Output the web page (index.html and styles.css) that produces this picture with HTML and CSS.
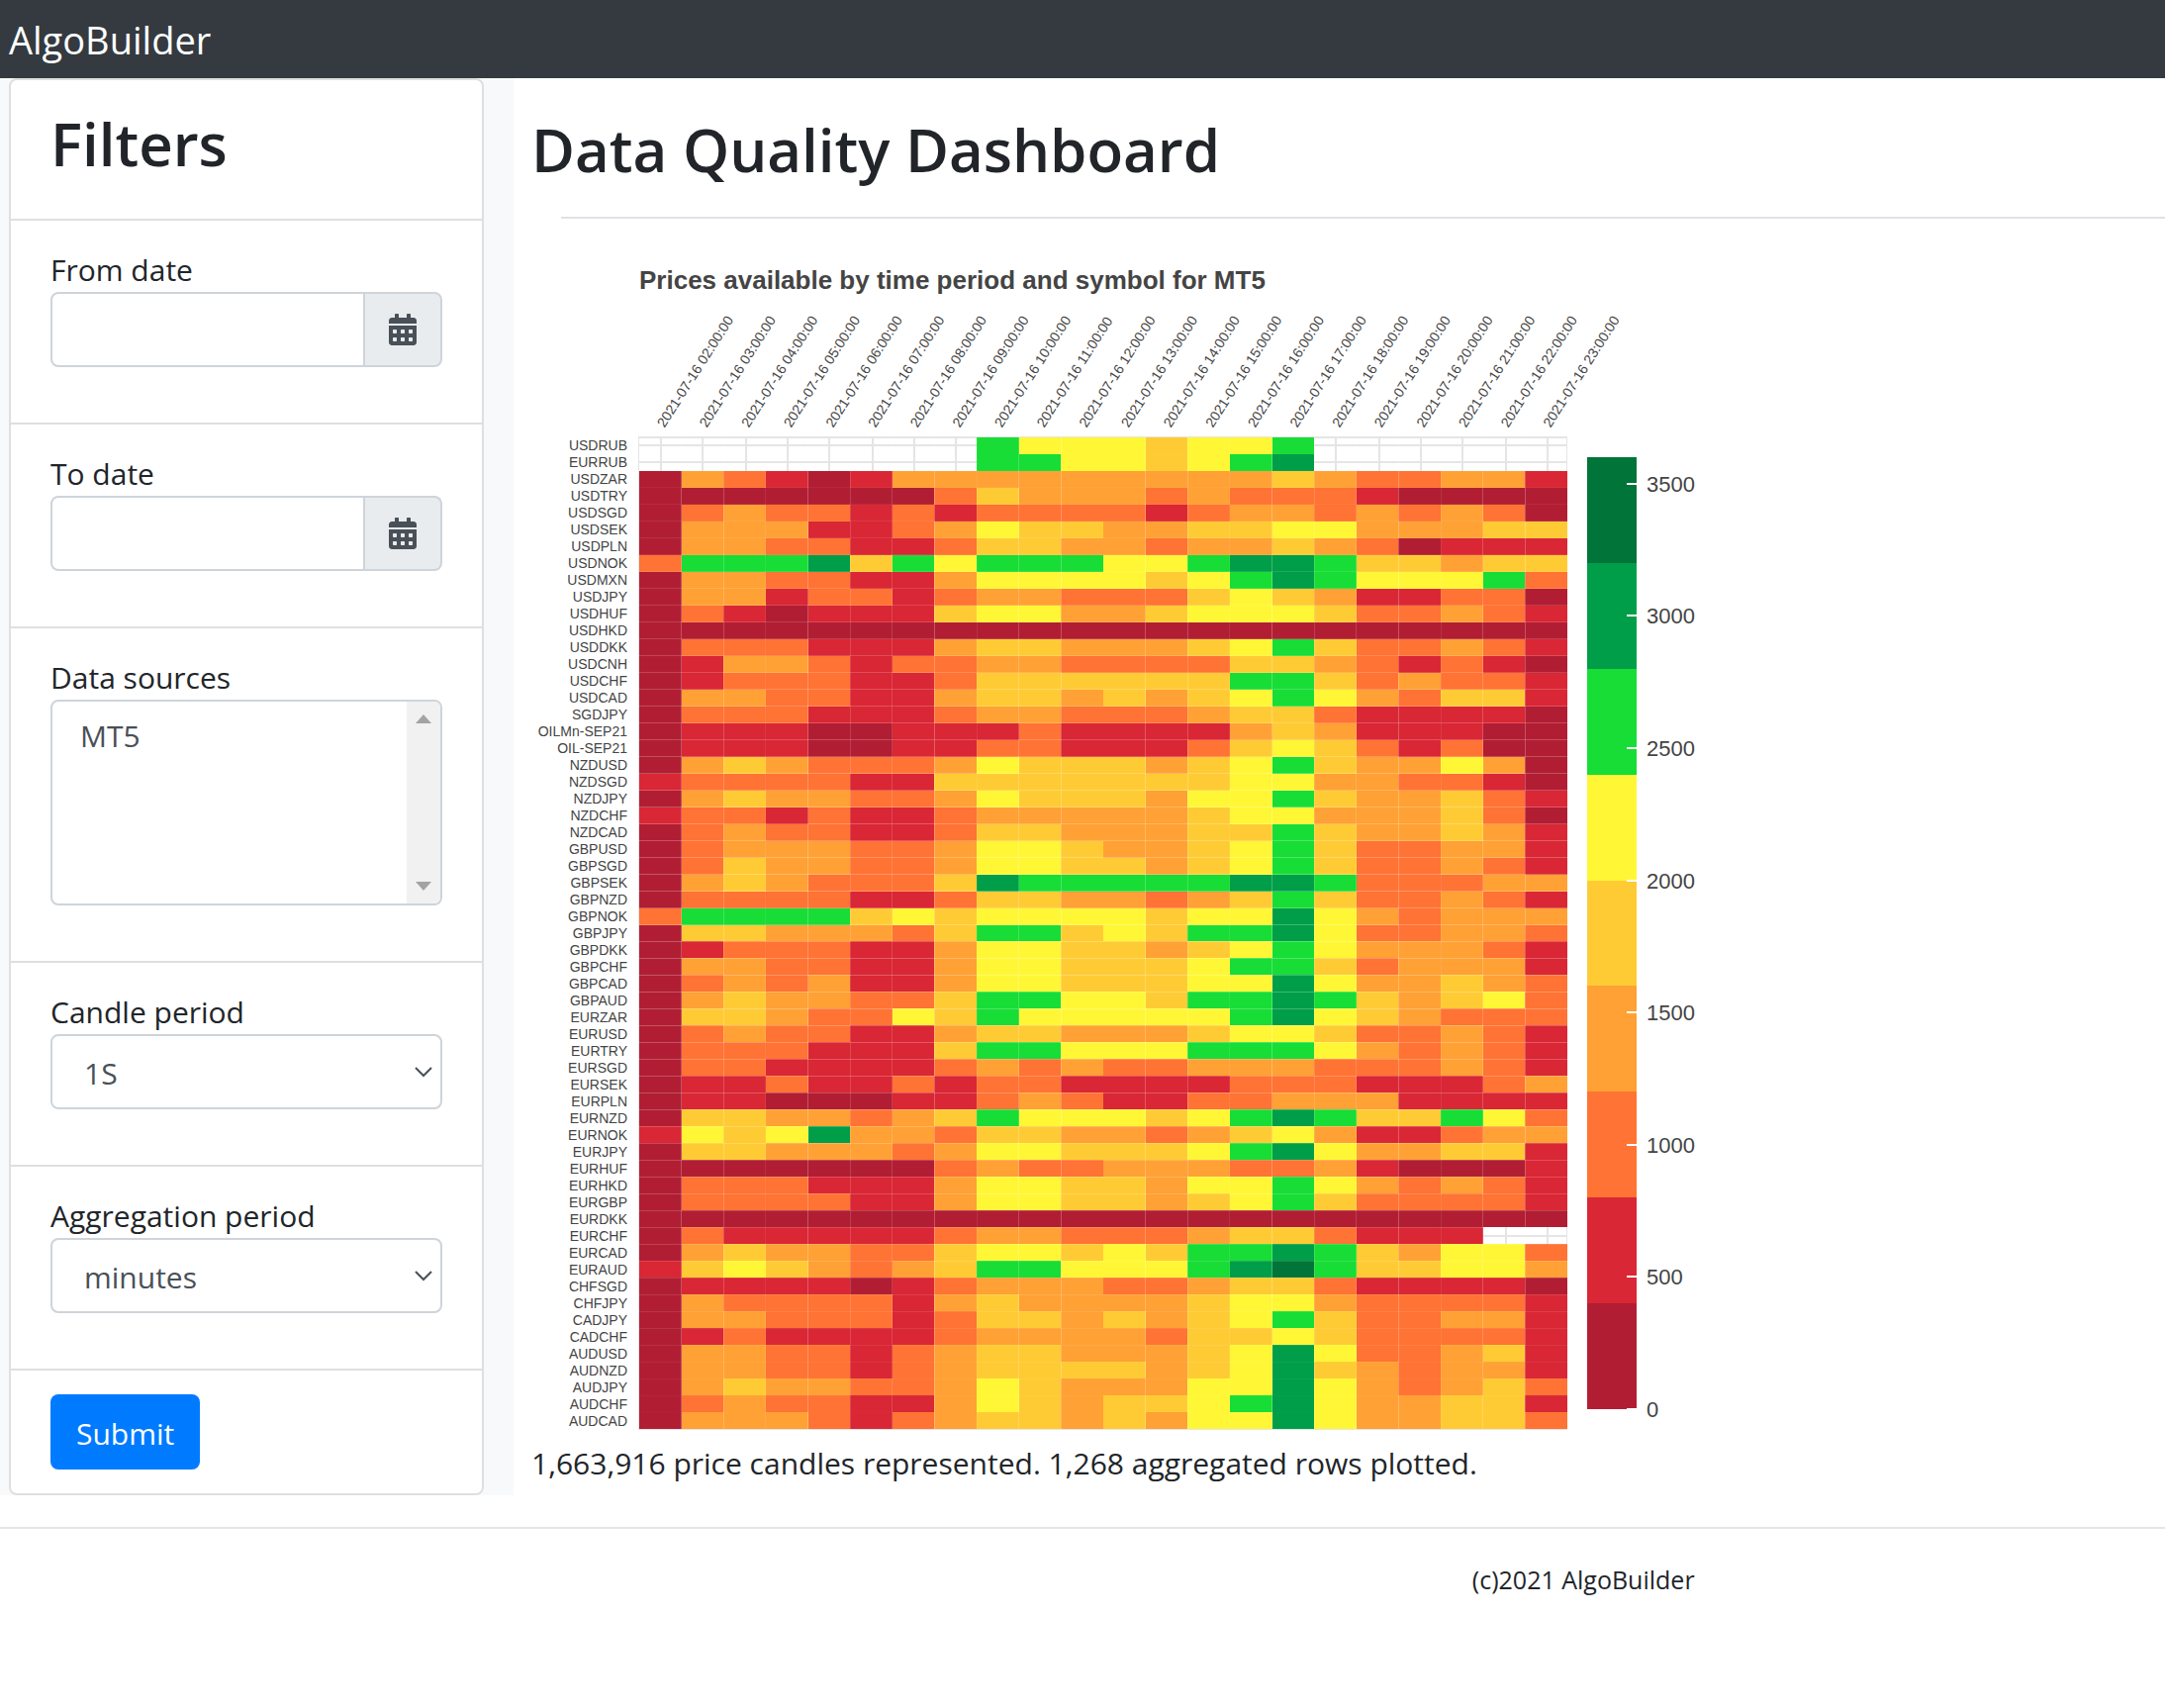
FILE: index.html
```html
<!DOCTYPE html>
<html lang="en">
<head>
<meta charset="utf-8">
<meta name="viewport" content="width=device-width, initial-scale=1">
<title>AlgoBuilder</title>
<link rel="stylesheet" href="styles.css">
</head>
<body>
<header class="navbar"><a class="brand" href="#">AlgoBuilder</a></header>
<div class="layout">
  <aside class="sidebar">
    <form class="card">
      <div class="item"><h2 class="heading filters-title">Filters</h2></div>
      <div class="item">
        <div class="group">
          <label for="from">From date</label>
          <div class="input-group">
            <input class="control" id="from" type="text">
            <button class="addon" type="button" aria-label="Pick from date">
              <svg class="calendar" viewBox="0 0 448 512"><path d="M0 464c0 26.500 21.500 48 48 48h352c26.500 0 48-21.500 48-48V192H0v272zm320-196c0-6.600 5.400-12 12-12h40c6.600 0 12 5.400 12 12v40c0 6.600-5.400 12-12 12h-40c-6.600 0-12-5.400-12-12v-40zm0 128c0-6.600 5.400-12 12-12h40c6.600 0 12 5.400 12 12v40c0 6.600-5.400 12-12 12h-40c-6.600 0-12-5.400-12-12v-40zM192 268c0-6.600 5.400-12 12-12h40c6.600 0 12 5.400 12 12v40c0 6.600-5.400 12-12 12h-40c-6.600 0-12-5.400-12-12v-40zm0 128c0-6.600 5.400-12 12-12h40c6.600 0 12 5.400 12 12v40c0 6.600-5.400 12-12 12h-40c-6.600 0-12-5.400-12-12v-40zM64 268c0-6.600 5.400-12 12-12h40c6.600 0 12 5.400 12 12v40c0 6.600-5.400 12-12 12H76c-6.600 0-12-5.400-12-12v-40zm0 128c0-6.600 5.400-12 12-12h40c6.600 0 12 5.400 12 12v40c0 6.600-5.400 12-12 12H76c-6.600 0-12-5.400-12-12v-40zM400 64h-48V16c0-8.800-7.200-16-16-16h-32c-8.800 0-16 7.200-16 16v48H160V16c0-8.800-7.200-16-16-16h-32c-8.800 0-16 7.200-16 16v48H48C21.500 64 0 85.500 0 112v48h448v-48c0-26.500-21.500-48-48-48z"/></svg>
            </button>
          </div>
        </div>
      </div>
      <div class="item">
        <div class="group">
          <label for="to">To date</label>
          <div class="input-group">
            <input class="control" id="to" type="text">
            <button class="addon" type="button" aria-label="Pick to date">
              <svg class="calendar" viewBox="0 0 448 512"><path d="M0 464c0 26.500 21.500 48 48 48h352c26.500 0 48-21.500 48-48V192H0v272zm320-196c0-6.600 5.400-12 12-12h40c6.600 0 12 5.400 12 12v40c0 6.600-5.400 12-12 12h-40c-6.600 0-12-5.400-12-12v-40zm0 128c0-6.600 5.400-12 12-12h40c6.600 0 12 5.400 12 12v40c0 6.600-5.400 12-12 12h-40c-6.600 0-12-5.400-12-12v-40zM192 268c0-6.600 5.400-12 12-12h40c6.600 0 12 5.400 12 12v40c0 6.600-5.400 12-12 12h-40c-6.600 0-12-5.400-12-12v-40zm0 128c0-6.600 5.400-12 12-12h40c6.600 0 12 5.400 12 12v40c0 6.600-5.400 12-12 12h-40c-6.600 0-12-5.400-12-12v-40zM64 268c0-6.600 5.400-12 12-12h40c6.600 0 12 5.400 12 12v40c0 6.600-5.400 12-12 12H76c-6.600 0-12-5.400-12-12v-40zm0 128c0-6.600 5.400-12 12-12h40c6.600 0 12 5.400 12 12v40c0 6.600-5.400 12-12 12H76c-6.600 0-12-5.400-12-12v-40zM400 64h-48V16c0-8.800-7.200-16-16-16h-32c-8.800 0-16 7.200-16 16v48H160V16c0-8.800-7.200-16-16-16h-32c-8.800 0-16 7.200-16 16v48H48C21.500 64 0 85.500 0 112v48h448v-48c0-26.500-21.500-48-48-48z"/></svg>
            </button>
          </div>
        </div>
      </div>
      <div class="item">
        <div class="group">
          <label for="sources">Data sources</label>
          <div class="select-wrap">
            <select class="control listbox" id="sources" multiple size="4"><option>MT5</option></select>
            <div class="scrollbar" aria-hidden="true">
              <svg class="scroll-arrow" viewBox="0 0 16 9"><path d="M8 0l8 9H0z"/></svg>
              <svg class="scroll-arrow" viewBox="0 0 16 9"><path d="M8 9L0 0h16z"/></svg>
            </div>
          </div>
        </div>
      </div>
      <div class="item">
        <div class="group">
          <label for="candle">Candle period</label>
          <div class="select-wrap">
            <select class="control dropdown" id="candle"><option>1S</option></select>
            <svg class="chevron" viewBox="0 0 18 12"><path d="M1 2l8 8 8-8"/></svg>
          </div>
        </div>
      </div>
      <div class="item">
        <div class="group">
          <label for="aggregation">Aggregation period</label>
          <div class="select-wrap">
            <select class="control dropdown" id="aggregation"><option>minutes</option></select>
            <svg class="chevron" viewBox="0 0 18 12"><path d="M1 2l8 8 8-8"/></svg>
          </div>
        </div>
      </div>
      <div class="item"><button class="submit" type="submit">Submit</button></div>
    </form>
  </aside>
  <main class="content">
    <h1 class="heading page-title">Data Quality Dashboard</h1>
    <div class="chart-section">
      <svg class="chart" id="chart" viewBox="0 0 1200 1232" role="img" aria-label="Prices available by time period and symbol for MT5"></svg>
    </div>
    <p class="summary">1,663,916 price candles represented. 1,268 aggregated rows plotted.</p>
  </main>
</div>
<footer class="footer"><small class="copyright">(c)2021 AlgoBuilder</small></footer>
<script src="chart.js"></script>
</body>
</html>
```
FILE: styles.css
```css
* { box-sizing: border-box; }

body {
  margin: 0;
  background: #fff;
  color: #212529;
  font-family: "Open Sans", "Noto Sans", sans-serif;
  font-size: 30px;
  line-height: 48px;
}

.navbar {
  display: flex;
  align-items: center;
  height: 79px;
  padding: 0 9px;
  background: #343a40;
}

.brand {
  color: #fff;
  font-size: 38px;
  line-height: 60px;
  text-decoration: none;
}

.layout { display: flex; }

.sidebar {
  flex: none;
  width: 519px;
  padding: 0 30px 0 9px;
  background: #f8f9fa;
}

.card {
  border: 2px solid #dfdfdf;
  border-radius: 8px;
  background: #fff;
}

.item { padding: 24px 40px; }
.item + .item { border-top: 2px solid #dfdfdf; }

.heading {
  margin: 0;
  padding-top: 4px;
  font-size: 60px;
  font-weight: 600;
  line-height: 72px;
}

.filters-title { margin-bottom: 16px; }

.group { margin-bottom: 32px; }
.group label {
  display: block;
  padding-top: 4px;
  line-height: 44px;
}

.control {
  display: block;
  width: 100%;
  height: 76px;
  margin: 0;
  padding: 12px 24px;
  border: 2px solid #ced4da;
  border-radius: 8px;
  background: #fff;
  color: #495057;
  font: inherit;
}

.input-group { display: flex; }
.input-group .control {
  flex: 1;
  min-width: 0;
  border-radius: 8px 0 0 8px;
}

.addon {
  display: flex;
  align-items: center;
  justify-content: center;
  width: 78px;
  padding: 0;
  border: 2px solid #ced4da;
  border-left: 0;
  border-radius: 0 8px 8px 0;
  background: #e9ecef;
}

.calendar { width: 28px; height: 32px; fill: #495057; }

.select-wrap { position: relative; }
.dropdown { appearance: none; padding: 4px 32px 0; }

.listbox {
  height: 208px;
  padding-top: 14px;
  overflow: hidden;
  line-height: 43px;
}
.listbox option { padding: 0 4px; }

.scrollbar {
  position: absolute;
  top: 2px;
  right: 2px;
  bottom: 2px;
  display: flex;
  flex-direction: column;
  align-items: center;
  justify-content: space-between;
  width: 34px;
  padding: 13px 0;
  border-radius: 0 6px 6px 0;
  background: #f1f1f1;
}
.scroll-arrow { width: 16px; height: 9px; fill: #a3a3a3; }

.chevron {
  position: absolute;
  top: 32px;
  right: 10px;
  width: 18px;
  height: 12px;
  fill: none;
  stroke: #495057;
  stroke-width: 2;
  pointer-events: none;
}

.submit {
  display: block;
  height: 76px;
  padding: 4px 26px 0;
  border: 0;
  border-radius: 8px;
  background: #007bff;
  color: #fff;
  font: inherit;
}

.content {
  flex: 1;
  min-width: 0;
  padding: 32px 0 0 18px;
}

.page-title { margin-bottom: 32px; }

.chart-section::before {
  content: "";
  display: block;
  height: 2px;
  margin-left: 30px;
  background: #dee2e6;
}

.chart {
  display: block;
  width: 1200px;
  height: 1232px;
  font-family: "Liberation Sans", Arial, sans-serif;
  fill: #444;
}
.chart-title { font-size: 26px; font-weight: 700; }
.tick-label { font-size: 14px; }
.scale-label { font-size: 22px; }
.end { text-anchor: end; }
.grid-line { fill: #e5e5e5; }
.seam { fill: #fff; }
.scale-tick { fill: #fff; }

.summary {
  margin: 0;
  padding-top: 4px;
  line-height: 44px;
}

.footer {
  margin-top: 32px;
  padding: 26px 0;
  border-top: 2px solid #e5e5e5;
}
.copyright { margin-left: 68%; font-size: 25px; }
```
FILE: chart.js
```js
// One digit per hour (02:00 to 23:00): index into the palette, "." for no data.
const rows = [
  ["USDRUB", "........65554556......"],
  ["EURRUB", "........66554567......"],
  ["USDZAR", "0321013333333334322331"],
  ["USDTRY", "0000000243332322210000"],
  ["USDSGD", "0232212122221233232320"],
  ["USDSEK", "0333112354433445533344"],
  ["USDPLN", "0332211244332334320111"],
  ["USDNOK", "2666746566655677644344"],
  ["USDMXN", "0332211355554567655562"],
  ["USDJPY", "0331221233222454311220"],
  ["USDHUF", "0210111455334555422321"],
  ["USDHKD", "0000000000000000000000"],
  ["USDDKK", "0222111344333456422321"],
  ["USDCNH", "0133212233222244321210"],
  ["USDCHF", "0122211244444466423221"],
  ["USDCAD", "0332211344343456532441"],
  ["SGDJPY", "0222111233222344211110"],
  ["OILMn-SEP21", "0111001112111134311100"],
  ["OIL-SEP21", "0111001122111245421200"],
  ["NZDUSD", "0343222354443456433530"],
  ["NZDSGD", "1222211444444455332210"],
  ["NZDJPY", "0343322354443556433421"],
  ["NZDCHF", "1221211233333455333420"],
  ["NZDCAD", "0232211244333446433431"],
  ["GBPUSD", "0233322355433456422331"],
  ["GBPSGD", "0243322355443456422321"],
  ["GBPSEK", "0343222476666677622233"],
  ["GBPNZD", "0222211244332346422321"],
  ["GBPNOK", "2666645455554557532333"],
  ["GBPJPY", "0443332466454667522332"],
  ["GBPDKK", "0122211355443456533321"],
  ["GBPCHF", "0332211355444566423331"],
  ["GBPCAD", "0232311355444557533432"],
  ["GBPAUD", "0343322466554667643452"],
  ["EURZAR", "0443225465555567543222"],
  ["EURUSD", "0232211344333455422321"],
  ["EURTRY", "0222111466555666532321"],
  ["EURSGD", "0221111232322333222321"],
  ["EURSEK", "0112112122111122211123"],
  ["EURPLN", "0110001123211223331111"],
  ["EURNZD", "0443323465554567644652"],
  ["EURNOK", "1545733244332345311233"],
  ["EURJPY", "0443332355444567533441"],
  ["EURHUF", "0000000232233322310001"],
  ["EURHKD", "0222111355443556532321"],
  ["EURGBP", "0222211355443456422221"],
  ["EURDKK", "0000000000000000000000"],
  ["EURCHF", "02111112332223442111.."],
  ["EURCAD", "0343322455454667643552"],
  ["EURAUD", "1454323466555678644553"],
  ["CHFSGD", "0111101233322344211110"],
  ["CHFJPY", "0322221343333455322221"],
  ["CADJPY", "0332221244343456422331"],
  ["CADCHF", "0121111233332445422221"],
  ["AUDUSD", "0332212344333457522341"],
  ["AUDNZD", "0332212344443457432331"],
  ["AUDJPY", "0343322354333557532342"],
  ["AUDCHF", "0232211354344567533441"],
  ["AUDCAD", "0333212344343557533442"]
];
const palette = ["#b11e33", "#d92735", "#ff7334", "#ffa135", "#ffcb35", "#fff735", "#18dd36", "#009e48", "#007439"];
const chart = document.getElementById("chart");
const plot = { x: 109, y: 221, w: 938, h: 1002 };
const columns = 22;
const colX = i => Math.round(plot.x + i * plot.w / columns);
const rowY = i => Math.round(plot.y + i * plot.h / rows.length);

function add(tag, attrs, text) {
  const el = document.createElementNS("http://www.w3.org/2000/svg", tag);
  for (const key in attrs) el.setAttribute(key, attrs[key]);
  if (text !== undefined) el.textContent = text;
  chart.appendChild(el);
}
function rect(x, y, width, height, attrs) {
  add("rect", { x, y, width, height, ...attrs });
}

add("text", { x: plot.x, y: 71, class: "chart-title" }, "Prices available by time period and symbol for MT5");

// Grid and outline, seen where there are no cells
const line = { class: "grid-line" };
rect(plot.x - 1, plot.y - 1, plot.w + 1, 2, line);
rect(plot.x - 1, plot.y + plot.h, plot.w + 1, 1, line);
rect(plot.x - 1, plot.y - 1, 1, plot.h + 2, line);
rect(plot.x + plot.w - 1, plot.y - 1, 1, plot.h + 1, line);
for (let c = 0; c < columns; c++) {
  const mid = plot.x + (c + 0.5) * plot.w / columns;
  rect(Math.round(mid / 2) * 2, plot.y, 2, plot.h, line);
  const hour = String(c + 2).padStart(2, "0");
  add("text", { x: 0, y: 5, class: "tick-label", transform: `translate(${mid.toFixed(1)} 209) rotate(-57.3)` }, `2021-07-16 ${hour}:00:00`);
}
rows.forEach(([symbol], r) => {
  const mid = Math.round(plot.y + (r + 0.5) * plot.h / rows.length);
  rect(plot.x, mid - 1, plot.w, 2, line);
  add("text", { x: plot.x - 12, y: mid + 5, class: "tick-label end" }, symbol);
});

// Cells
rows.forEach(([, values], r) => {
  [...values].forEach((value, c) => {
    if (value === ".") return;
    rect(colX(c), rowY(r), colX(c + 1) - colX(c), rowY(r + 1) - rowY(r), { fill: palette[value] });
  });
});

// Light seams where a cell boundary falls between two pixels
function seamOpacity(offset) {
  const part = offset - Math.floor(offset);
  return (part * (1 - part)).toFixed(3);
}
for (let c = 1; c < columns; c++) {
  const offset = c * plot.w / columns;
  rect(plot.x + Math.floor(offset), plot.y, 1, plot.h, { class: "seam", "fill-opacity": seamOpacity(offset) });
}
for (let r = 1; r < rows.length; r++) {
  const offset = r * plot.h / rows.length;
  rect(plot.x, plot.y + Math.floor(offset), plot.w, 1, { class: "seam", "fill-opacity": seamOpacity(offset) });
}

// Colour scale
const scale = { x: 1067, y: 241, w: 50, h: 962 };
palette.forEach((fill, i) => {
  const top = Math.round(scale.y + scale.h * (8 - i) / 9);
  const bottom = Math.round(scale.y + scale.h * (9 - i) / 9);
  rect(scale.x, top, scale.w, bottom - top, { fill });
});
for (let v = 0; v <= 3500; v += 500) {
  const y = Math.round(scale.y + scale.h * (1 - v / 3600));
  rect(scale.x + 40, y - 1, 10, 2, { class: "scale-tick" });
  add("text", { x: scale.x + 60, y: y + 8, class: "scale-label" }, v);
}
```
